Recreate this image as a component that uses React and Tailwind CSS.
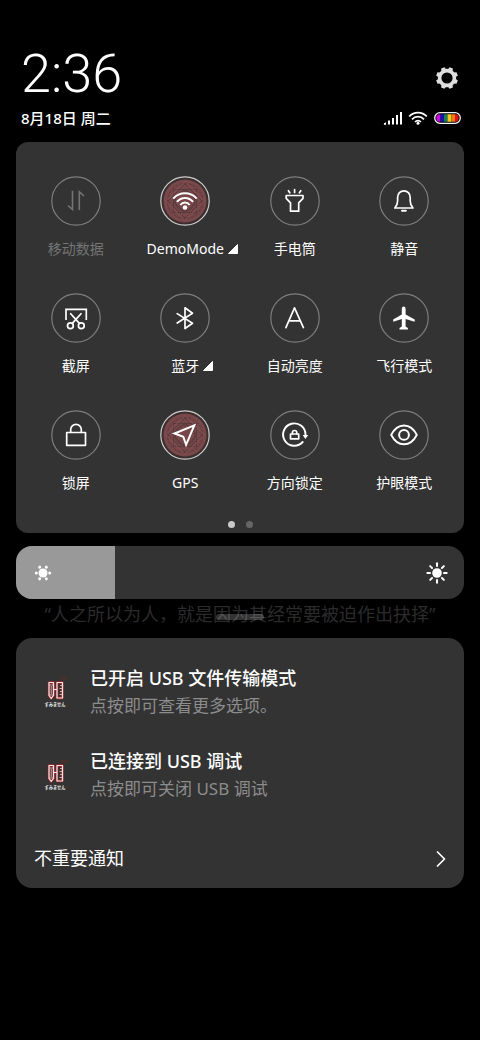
import React, { useState } from "react";

const stroke = {
    fill: "none",
    stroke: "currentColor",
    strokeWidth: 1.7,
    strokeLinecap: "round",
    strokeLinejoin: "round",
};

const icons = {
    data: (
        <g {...stroke} strokeWidth={1.6} strokeLinecap="butt" strokeLinejoin="miter">
            <path d="M17 29.5 21.5 33.5V14.7" />
            <path d="M28.3 34V15.8L33 20" />
        </g>
    ),
    wifi: (
        <g {...stroke} strokeWidth={2} strokeLinecap="butt">
            <path d="M13.2 22.6C19.5 15.6 30.5 15.6 36.8 22.6" />
            <path d="M16.9 25.8C21.3 20.6 28.7 20.6 33.1 25.8" />
            <path d="M20.3 29C22.8 25.7 27.2 25.7 29.7 29" />
            <circle cx="25" cy="31.5" r="2.3" fill="currentColor" stroke="none" />
        </g>
    ),
    torch: (
        <g {...stroke}>
            <path d="M18.4 14.7 19.8 16.8M24.6 13.6V16.4M30.8 14.7 29.4 16.8" />
            <path d="M16.2 19.5H33V22.3L28.7 26.8V35.2H20.5V26.8L16.2 22.3Z" />
        </g>
    ),
    bell: (
        <g {...stroke}>
            <path d="M15.8 32H34C32 29.8 31.2 28 31.2 25V21.5C31.2 17.5 28.4 14.8 24.9 14.8S18.6 17.5 18.6 21.5V25C18.6 28 17.8 29.8 15.8 32Z" />
            <path d="M23 34.8H26.8" strokeWidth={2} />
        </g>
    ),
    screenshot: (
        <g {...stroke}>
            <path d="M15 27V16.4H35.3V27" strokeLinecap="butt" strokeLinejoin="miter" />
            <path d="M19.7 20.7 28.4 30.4M30 20.7 21.3 30.4" />
            <circle cx="19.4" cy="32.7" r="2.9" />
            <circle cx="30.3" cy="32.7" r="2.9" />
        </g>
    ),
    bluetooth: (
        <g {...stroke}>
            <path d="M17.2 20.6 32.5 30.3 25 35.5V14.8L32.5 20.3 17.2 30" />
        </g>
    ),
    auto: (
        <g {...stroke}>
            <path d="M15.9 34.6 24.5 14.9 33.4 34.6M19 27.8H30.3" />
        </g>
    ),
    plane: (
        <path
            fill="currentColor"
            d="M24.7 13.5C25.9 13.5 26.6 14.5 26.6 16V21.4L35.7 26.6V28.7L26.6 25.9V33.5L28.9 35V36.5H20.5V35L22.8 33.5V25.9L14.2 28.7V26.6L22.8 21.4V16C22.8 14.5 23.5 13.5 24.7 13.5Z"
        />
    ),
    lock: (
        <g {...stroke}>
            <rect x="15.7" y="22.5" width="18.8" height="12.8" />
            <path d="M19.7 22.3V19.6A5.3 5.3 0 0 1 30.3 19.6V22.3" />
        </g>
    ),
    gps: (
        <path
            {...stroke}
            strokeWidth={2}
            strokeLinejoin="miter"
            d="M34.3 15.4 14.5 23.5 23.3 26.7 26.1 34.8Z"
        />
    ),
    rotation: (
        <g {...stroke}>
            <path d="M32.7 32A11.2 11.2 0 1 1 35.5 25" strokeWidth={1.9} />
            <path d="M32.7 25H38.2L35.4 29Z" fill="currentColor" stroke="none" />
            <rect x="20.5" y="24" width="8.2" height="4.8" />
            <path d="M22.4 23.7V22.7A2.2 2.2 0 0 1 26.8 22.7V23.7" />
        </g>
    ),
    eye: (
        <g {...stroke} strokeWidth={2}>
            <path d="M12.2 24.9C18.5 12.3 31.5 12.3 37.8 24.9C31.5 37.5 18.5 37.5 12.2 24.9Z" />
            <circle cx="25" cy="24.9" r="4.9" />
        </g>
    ),
};

const tiles = [
    { label: "移动数据", icon: "data", disabled: true },
    { label: "DemoMode", icon: "wifi", active: true, expandable: true },
    { label: "手电筒", icon: "torch" },
    { label: "静音", icon: "bell" },
    { label: "截屏", icon: "screenshot" },
    { label: "蓝牙", icon: "bluetooth", expandable: true },
    { label: "自动亮度", icon: "auto" },
    { label: "飞行模式", icon: "plane" },
    { label: "锁屏", icon: "lock" },
    { label: "GPS", icon: "gps", active: true },
    { label: "方向锁定", icon: "rotation" },
    { label: "护眼模式", icon: "eye" },
];

const notifications = [
    { title: "已开启 USB 文件传输模式", text: "点按即可查看更多选项。" },
    { title: "已连接到 USB 调试", text: "点按即可关闭 USB 调试" },
];

// Woven red disc behind the icons of active tiles
function ActiveDisc() {
    return (
        <g fill="none">
            <circle cx="25" cy="25" r="24" fill="#3b2f30" />
            <circle cx="25" cy="25" r="21.5" fill="#774648" />
            <g stroke="#573b3d" strokeWidth="1">
                <circle cx="25" cy="25" r="17.5" strokeDasharray="3 1.5" />
                <circle cx="25" cy="25" r="10" />
                <rect x="13.5" y="13.5" width="23" height="23" />
                <path d="M25 8 42 25 25 42 8 25Z" />
                <path d="M25 13 37 25 25 37 13 25Z" />
            </g>
            <g stroke="#8a5656" strokeWidth="0.7">
                <circle cx="25" cy="25" r="20" strokeDasharray="1 1.5" />
                <circle cx="25" cy="25" r="14" strokeDasharray="1.5 1" />
                <path d="M25 5.5 44.5 25 25 44.5 5.5 25Z" />
            </g>
        </g>
    );
}

function Tile({ tile }) {
    return (
        <button
            type="button"
            disabled={tile.disabled}
            className={
                tile.disabled
                    ? "flex flex-col items-center gap-[13px] text-[#747474]"
                    : "flex flex-col items-center gap-[13px] text-white"
            }
        >
            <svg viewBox="0 0 50 50" className="size-[50px]" aria-hidden="true">
                {tile.active && <ActiveDisc />}
                <circle
                    cx="25"
                    cy="25"
                    r="24.2"
                    fill="none"
                    stroke={tile.active ? "#cfcccc" : "#7d7d7d"}
                    strokeWidth="1.2"
                />
                {icons[tile.icon]}
            </svg>
            <span className="relative text-sm leading-5 whitespace-nowrap">
                {tile.label}
                {tile.expandable && (
                    <svg
                        viewBox="0 0 10 10"
                        className="absolute top-[5px] left-full ml-1 size-2.5"
                        aria-hidden="true"
                    >
                        <path d="M9.5 0.5V9.5H0.5Z" fill="currentColor" stroke="currentColor" strokeLinejoin="round" />
                    </svg>
                )}
            </span>
        </button>
    );
}

function GearIcon() {
    return (
        <svg viewBox="0 0 24 24" className="size-6" fill="none" stroke="#dedede" aria-hidden="true">
            <circle cx="12" cy="12" r="7.4" strokeWidth="3.6" />
            {[22.5, 67.5, 112.5, 157.5, 202.5, 247.5, 292.5, 337.5].map((angle) => (
                <path
                    key={angle}
                    d="M9.4 3.8 10.2 1H13.8L14.6 3.8Z"
                    fill="#dedede"
                    stroke="none"
                    transform={`rotate(${angle} 12 12)`}
                />
            ))}
        </svg>
    );
}

function StatusIcons() {
    return (
        <div className="-mr-0.5 flex items-center gap-1.5">
            <svg viewBox="0 0 20 14" className="h-3.5 w-5" aria-hidden="true">
                <path
                    d="M3 13.500V12M7 13.500V9.500M11 13.500V7M15 13.500V4M19 13.500V1"
                    stroke="#fff"
                    strokeWidth="2"
                />
                <path d="M1.500 13.500 4 11V13.500Z" fill="#fff" />
            </svg>
            <svg viewBox="0 0 20 14" className="h-3.5 w-5" fill="none" stroke="#fff" strokeWidth="1.8" aria-hidden="true">
                <path d="M1.2 5.5C6 0.3 14 0.3 18.8 5.5" />
                <path d="M4 8.4C7.3 4.8 12.7 4.8 16 8.4" />
                <path d="M7 11C8.8 9.1 11.2 9.1 13 11" />
                <circle cx="10" cy="12.2" r="1.5" fill="#fff" stroke="none" />
            </svg>
            <svg viewBox="0 0 27 12" className="h-3 w-[27px]" aria-hidden="true">
                <clipPath id="charge">
                    <rect x="2.3" y="2.3" width="22.4" height="7.4" rx="3.7" />
                </clipPath>
                <rect x="0.7" y="0.7" width="25.6" height="10.6" rx="5.3" fill="none" stroke="#f4f4f4" strokeWidth="1.3" />
                <g clipPath="url(#charge)">
                    <path d="M2 2H6.5V10H2Z" fill="#c60ae0" />
                    <path d="M6.5 2H10V10H6.5Z" fill="#1b12a8" />
                    <path d="M10 2H13.5V10H10Z" fill="#16805a" />
                    <path d="M13.5 2H17.5V10H13.5Z" fill="#f4c91c" />
                    <path d="M17.5 2H21V10H17.5Z" fill="#f57a12" />
                    <path d="M21 2H25V10H21Z" fill="#e01616" />
                </g>
            </svg>
        </div>
    );
}

function Brightness() {
    const [value, setValue] = useState(22);

    return (
        <div className="relative mt-[13px] flex h-[53px] items-center justify-between overflow-hidden rounded-2xl bg-[#333] px-4">
            <div className="absolute inset-y-0 left-0 bg-[#999]" style={{ width: `${value}%` }} />
            <svg viewBox="0 0 22 22" className="relative size-[22px]" fill="#fff" aria-hidden="true">
                <circle cx="11" cy="11" r="4.5" />
                {[30, 90, 150, 210, 270, 330].map((angle) => (
                    <circle key={angle} cx="11" cy="4.3" r="1.5" transform={`rotate(${angle} 11 11)`} />
                ))}
            </svg>
            <svg viewBox="0 0 22 22" className="relative size-[22px]" fill="#fff" aria-hidden="true">
                <circle cx="11" cy="11" r="4.8" />
                {[0, 45, 90, 135, 180, 225, 270, 315].map((angle) => (
                    <path
                        key={angle}
                        d="M11 1.3V4"
                        stroke="#fff"
                        strokeWidth="2"
                        strokeLinecap="round"
                        transform={`rotate(${angle} 11 11)`}
                    />
                ))}
            </svg>
            <input
                type="range"
                min="0"
                max="100"
                aria-label="亮度"
                value={value}
                onChange={(e) => setValue(Number(e.target.value))}
                className="absolute inset-0 size-full opacity-0"
            />
        </div>
    );
}

function AppIcon() {
    return (
        <svg viewBox="0 0 28 34" className="h-[34px] w-7 shrink-0" aria-hidden="true">
            <g fill="none" strokeLinejoin="round">
                <path
                    d="M7 7.5H11.5V20.5L9.2 23.5 7 20.5ZM15 7.5H20.5V23H15ZM11.5 14.5H15"
                    stroke="#a3262b"
                    strokeWidth="2.4"
                />
                <path
                    d="M7 7.5H11.5V20.5L9.2 23.5 7 20.5ZM15 7.5H20.5V23H15ZM11.5 14.5H15"
                    stroke="#f5e6e6"
                    strokeWidth="1.2"
                />
                <path d="M7 10H11.5M7 20H11.5M9.2 11V19M20.5 10.5H18M20.5 13.5H17.5M20.5 16.5H18M20.5 19.5H17.5" stroke="#f0caca" strokeWidth="0.8" />
                <path d="M19.5 2 21 3.3 19.5 4.6M22.5 2 24 3.3 22.5 4.6" stroke="#8c1c20" strokeWidth="0.9" />
            </g>
            <text x="13" y="30.5" textAnchor="middle" fontSize="4.2" fontWeight="700" fill="#eee">
                すみません
            </text>
        </svg>
    );
}

function App() {
    return (
        <div className="min-h-screen bg-black px-4 pt-12 font-['Noto_Sans','Noto_Sans_CJK_SC',sans-serif] text-white">
            {/* Clock and status */}
            <header className="px-[5px]">
                <div className="flex items-start justify-between">
                    <time className="font-['Roboto','Noto_Sans',sans-serif] text-[54px] leading-[52px] font-light">2:36</time>
                    <button type="button" aria-label="设置" className="mt-[18px]">
                        <GearIcon />
                    </button>
                </div>
                <div className="mt-2 flex items-center justify-between">
                    <p className="text-[15px] leading-5 font-medium">8月18日 周二</p>
                    <StatusIcons />
                </div>
            </header>

            {/* Quick settings */}
            <section className="mt-3.5 rounded-xl bg-[#333] px-[5px] pt-[34px] pb-[5px]">
                <div className="grid grid-cols-4 gap-y-[34px]">
                    {tiles.map((tile) => (
                        <Tile key={tile.label} tile={tile} />
                    ))}
                </div>
                <div className="mt-7 flex justify-center gap-[11px]">
                    <span className="size-[7px] rounded-full bg-[#c9c9c9]" />
                    <span className="size-[7px] rounded-full bg-[#666]" />
                </div>
            </section>

            <Brightness />

            <div className="relative mt-[3px] text-center text-[18px] leading-6 whitespace-nowrap text-[#2b2b2b]">
                “人之所以为人，就是因为其经常要被迫作出抉择”
                <div className="absolute inset-x-0 top-3 mx-auto h-1.5 w-12 rounded-full bg-white/20" />
            </div>

            {/* Notifications */}
            <section className="mt-3 rounded-2xl bg-[#333] pt-[27px] pb-px">
                <ul className="space-y-[29px]">
                    {notifications.map((item) => (
                        <li key={item.title} className="flex items-center gap-5 pl-[26px]">
                            <AppIcon />
                            <div>
                                <h2 className="text-[18px] leading-[27px] font-medium">{item.title}</h2>
                                <p className="text-[17px] leading-[27px] text-[#8c8c8c]">{item.text}</p>
                            </div>
                        </li>
                    ))}
                </ul>
                <a href="#more" className="mt-7 flex h-[57px] items-center justify-between px-[18px] text-[18px]">
                    不重要通知
                    <svg viewBox="0 0 10 16" className="h-4 w-2.5" aria-hidden="true">
                        <path d="M1.5 1 8.5 8 1.5 15" {...stroke} />
                    </svg>
                </a>
            </section>
        </div>
    );
}

export default App;
